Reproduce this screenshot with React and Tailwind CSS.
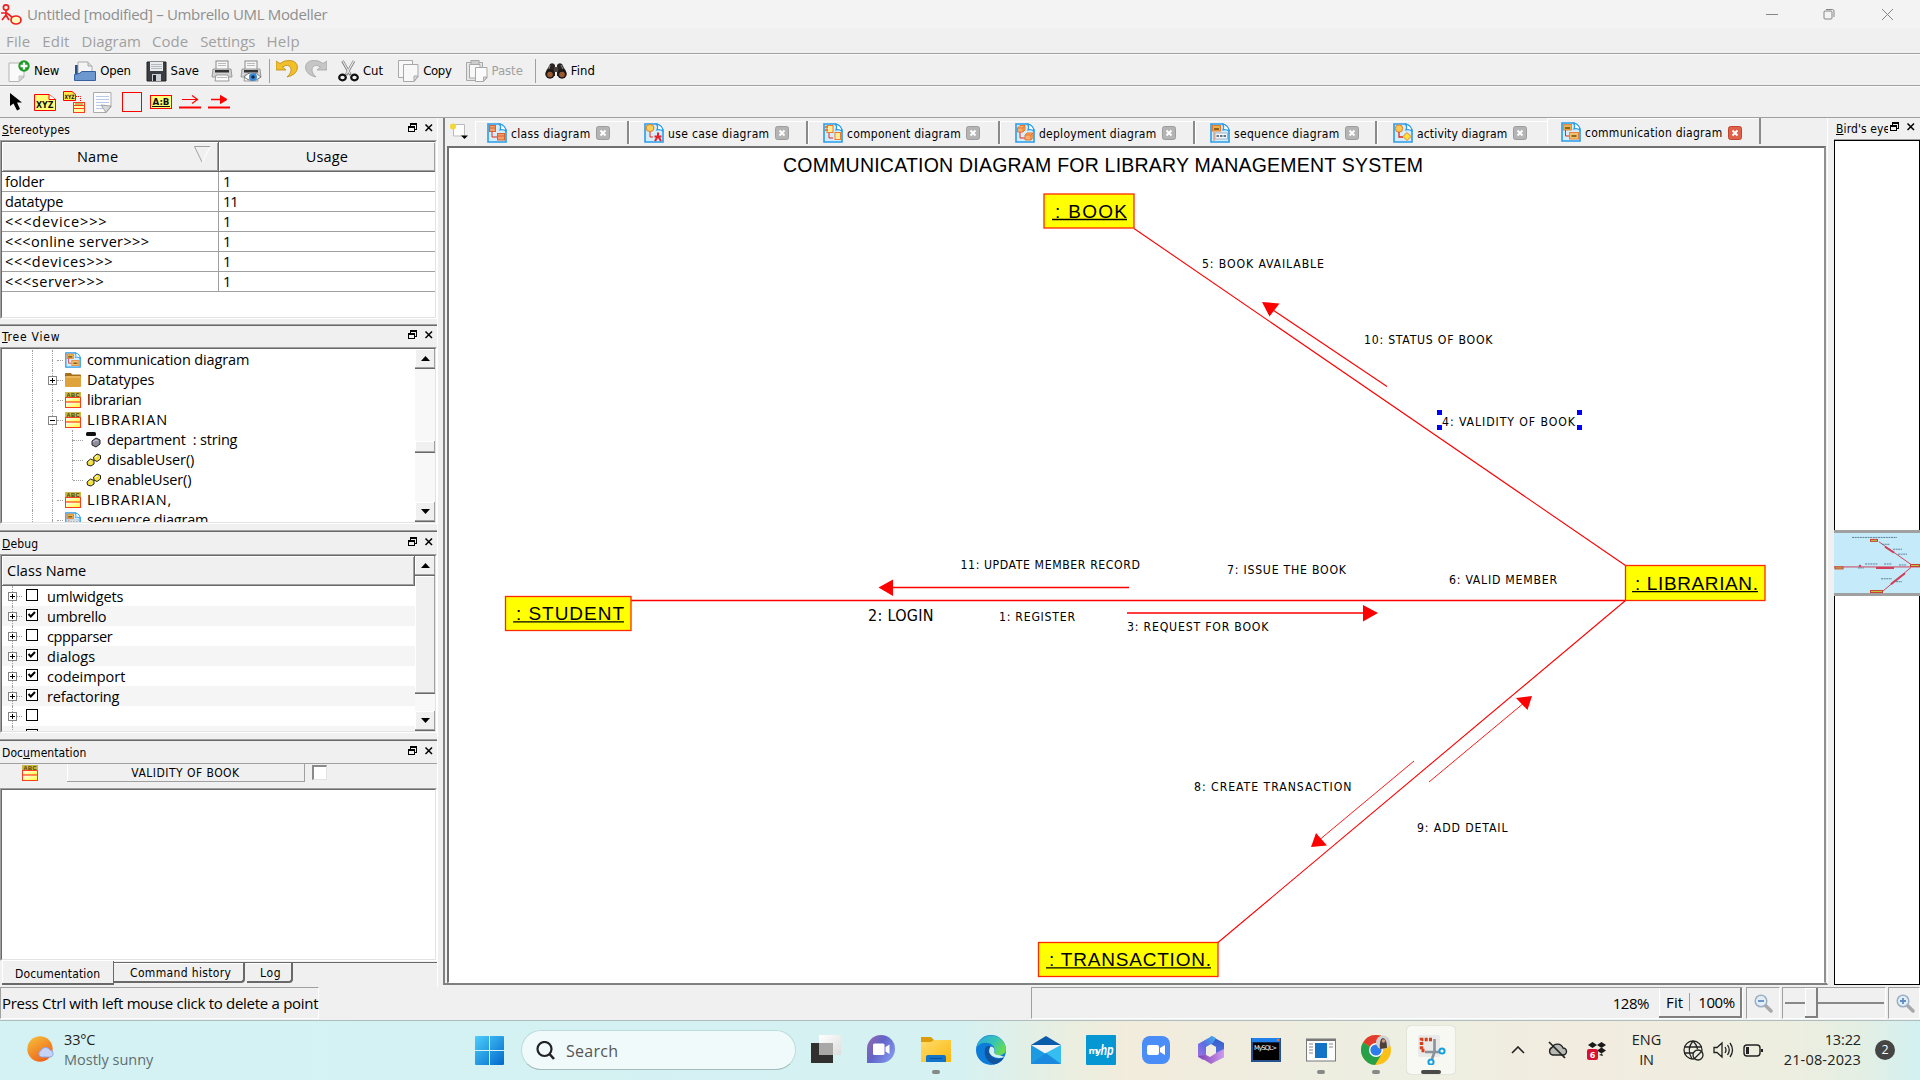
import React, { useLayoutEffect, useRef, useState } from "react";

const UI = "font-['Open_Sans','Noto_Sans',sans-serif]";
const TAH = "font-['DejaVu_Sans_Condensed','DejaVu_Sans',sans-serif] font-[stretch:condensed]";

/* Text whose tracking is adjusted so that it fills w pixels. */
function Fit({ w, className = "", children }) {
  const ref = useRef(null);
  const [ls, setLs] = useState(0);
  useLayoutEffect(() => {
    const el = ref.current;
    const n = el.textContent.length;
    const natural = el.getBoundingClientRect().width;
    if (n) setLs((w + 0.3 - natural) / n);
  }, [w]);
  return (
    <span ref={ref} className={"inline-block whitespace-pre shrink-0 " + className} style={{ letterSpacing: ls + "px" }}>
      {children}
    </span>
  );
}

/* ---------- small icons ---------- */
const DockIcons = () => (
  <svg width="26" height="10" viewBox="0 0 26 10" fill="none" stroke="#000" shapeRendering="crispEdges">
    <path d="M2.5 3V1M2 .5H8.5M2 1.5H8.5M8.5 0V6.5H6.5" />
    <path d="M.5 3.5H6.5V8.5H.5ZM.5 4.5H6.5" />
    <path d="M17.5 1.5L24 8M24 1.5L17.5 8" strokeWidth="1.5" shapeRendering="auto" />
  </svg>
);

const ClassIcon = () => (
  <svg width="16" height="16" viewBox="0 0 16 16" className="shrink-0">
    <defs>
      <linearGradient id="cy" x1="0" x2="1" y1="0" y2="1"><stop offset="0" stopColor="#fff" /><stop offset="1" stopColor="#ffff30" /></linearGradient>
    </defs>
    <rect width="16" height="16" fill="#ff3b20" />
    <rect x="0" y="0" width="16" height="5" fill="#c9b84a" />
    <text x="8" y="4.8" fontSize="5.6" textAnchor="middle" textLength="13" fontWeight="700" fontFamily="Liberation Sans" fill="#4c3c08">ABC</text>
    <rect x="1" y="6" width="14" height="3.4" fill="url(#cy)" />
    <rect x="1" y="10.6" width="14" height="4.4" fill="url(#cy)" />
  </svg>
);

function DiagramIcon({ kind, size = 20 }) {
  return (
    <svg width={size} height={size} viewBox="0 0 20 20" className="shrink-0">
      <path d="M1 1H13L19 7V19H1Z" fill="#d4ecfb" stroke="#2a9de8" strokeWidth="1.6" />
      <path d="M12.5 1.2C17 1.5 19 5 18.8 8C17 6.5 15 6.3 13 6.8C14 5 13.8 3 12.5 1.2Z" fill="#fff" stroke="#2a9de8" strokeWidth="1.2" />
      {kind === "class" && <g fill="#f4a06c" stroke="#d9622e"><rect x="2.5" y="2.5" width="6" height="6" /><path d="M5 9V14H10" fill="none" stroke="#e02a1a" /><rect x="10.500" y="10.500" width="7" height="6.500" /><path d="M3 5H8M11 13H17" /></g>}
      {kind === "usecase" && <g><ellipse cx="6" cy="5" rx="4" ry="3.500" fill="#f7d25a" stroke="#e07a20" /><path d="M6 9V14H9" fill="none" stroke="#e02a1a" /><path d="M14 9.500V13M10.500 13.500H17.500M14 13L11 18M14 13L17 18" stroke="#e8202a" strokeWidth="2" /></g>}
      {kind === "component" && <g fill="#fdee9a" stroke="#ee7a30"><rect x="4" y="2.500" width="6" height="7" /><path d="M2 4H5M2 7H5" strokeWidth="2" /><path d="M6 10V15H10" fill="none" stroke="#e02a1a" /><rect x="12" y="9.500" width="5.500" height="7" /></g>}
      {kind === "deployment" && <g fill="#f8b070" stroke="#e5762c"><path d="M2.500 5L5 2.500H10V7L8 9H2.500ZM2.500 5H8V9M8 5L10 2.500" /><path d="M5 9V15H10" fill="none" stroke="#e02a1a" /><path d="M10 12L12 10H18V14.500L16 17H10ZM10 12H16V17M16 12L18 10" /></g>}
      {kind === "sequence" && <g><rect x="2.500" y="2.500" width="8" height="5.500" fill="#e8b34c" stroke="#e5762c" /><path d="M4 6H9" stroke="#6b4a10" strokeWidth="1.500" /><rect x="5" y="10" width="12.500" height="6" fill="#f4f8fb" stroke="#8ea6b8" strokeWidth=".8" /><path d="M6.500 13H9M10 13H12.500M13.500 13H16" stroke="#657889" strokeWidth="2" /><path d="M4 9V18" stroke="#f08050" /></g>}
      {kind === "activity" && <g><circle cx="6" cy="5.500" r="3.700" fill="#f8c850" stroke="#e87a28" /><path d="M6 9V14H10" fill="none" stroke="#e02a1a" strokeWidth="1.300" /><path d="M14 9.500L18 13.500L14 17.500L10 13.500Z" fill="#ffe23a" stroke="#f07a28" /></g>}
      {kind === "communication" && <g><rect x="2.500" y="2.500" width="8" height="5.500" fill="#e8b34c" stroke="#e98240" /><path d="M4 6H9M10.500 14H15.500" stroke="#6b4a10" strokeWidth="1.500" /><path d="M4.500 8V14H8" fill="none" stroke="#e02a1a" /><rect x="8.500" y="10.500" width="9" height="6.500" fill="#efc168" stroke="#e98240" /><path d="M10.500 14H15.500" stroke="#6b4a10" strokeWidth="1.500" /></g>}
    </svg>
  );
}

const FolderIcon = () => (
  <svg width="16" height="16" viewBox="0 0 16 16" className="shrink-0">
    <path d="M0 2Q0 1 1 1H6L7 2.500H15Q16 2.500 16 3.500V14H0Z" fill="#a56e1a" />
    <rect x="0" y="4" width="16" height="11" rx="1" fill="#dfa23c" />
    <path d="M1 5H15" stroke="#f4cd80" />
  </svg>
);
const AttrIcon = () => (
  <svg width="16" height="16" viewBox="0 0 16 16" className="shrink-0">
    <rect x="0" y="0" width="10" height="4" rx="1.500" fill="#111" />
    <path d="M6 9L10 6L14 8V12L10 15L6 13Z" fill="#8d8b9c" stroke="#222" />
    <path d="M7 10L10 8L12 9" stroke="#cfcfe0" fill="none" />
  </svg>
);
const OpIcon = () => (
  <svg width="16" height="16" viewBox="0 0 16 16" className="shrink-0">
    <path d="M7.500 5L11 2L14.500 3.500V7L11 9.500L8 8Z" fill="#f3df3f" stroke="#222" />
    <path d="M1 10L4.500 7L8 8.500V12L5 14L1.500 13Z" fill="#f3df3f" stroke="#222" />
    <path d="M9 5.500L11 4M3 10L4.500 9" stroke="#fff" />
  </svg>
);

/* ---------- frames ---------- */
const Rule = () => <div className="h-[2px] w-full shrink-0 border-t border-[#a0a0a0] bg-[#696969]" />;

const DockTitle = ({ w, children }) => (
  <div className="flex h-[21px] shrink-0 items-center justify-between pl-[2px] pr-[3px]">
    <Fit w={w} className={TAH + " text-[12px] leading-[14px]"}>{children}</Fit>
    <div className="-mt-[4px]"><DockIcons /></div>
  </div>
);

const Sunken = ({ className = "", children }) => (
  <div className={"w-[437px] shrink-0 border border-b-white border-l-[#a0a0a0] border-r-white border-t-[#a0a0a0] " + className}>
    <div className="flex h-full overflow-hidden border border-b-[#e3e3e3] border-l-[#696969] border-r-[#e3e3e3] border-t-[#696969] bg-white">{children}</div>
  </div>
);

const HeadCell = ({ className = "", children }) => (
  <div className={"flex h-[30px] shrink-0 items-center border-b border-r border-b-[#696969] border-r-[#696969] bg-[#f0f0f0] pt-px shadow-[inset_1px_1px_0_#fff,inset_-1px_-1px_0_#a0a0a0] " + className}>{children}</div>
);

const ScrollBtn = ({ down }) => (
  <div className="flex h-[20px] w-[21px] shrink-0 items-center justify-center border-b border-r border-[#696969] bg-[#f0f0f0] shadow-[inset_-1px_-1px_0_#a0a0a0,inset_1px_1px_0_#fff]">
    <svg width="9" height="5" viewBox="0 0 9 5">{down ? <path d="M0 0H9L4.500 5Z" /> : <path d="M0 5H9L4.500 0Z" />}</svg>
  </div>
);
const Thumb = ({ className }) => (
  <div className={"w-[21px] shrink-0 border-b border-r border-[#696969] bg-[#f0f0f0] shadow-[inset_-1px_-1px_0_#a0a0a0,inset_1px_1px_0_#fff] " + className} />
);

/* ---------- left dock ---------- */
const stereotypes = [
  ["folder", 39, "1", 6], ["datatype", 58, "11", 14], ["<<<device>>>", 102, "1", 6],
  ["<<<online server>>>", 144, "1", 6], ["<<<devices>>>", 108, "1", 6], ["<<<server>>>", 99, "1", 6],
];

function Stereotypes() {
  return (
    <Sunken className="h-[179px]">
      <div className="flex w-full flex-col">
        <div className="flex">
          <HeadCell className="w-[217px]">
            <span className="flex w-full items-center pl-[75px]">
              <Fit w={41} className="text-[14.500px]">Name</Fit>
              <svg width="17" height="17" viewBox="0 0 17 17" className="-mt-[5px] ml-[76px]" fill="none"><path d="M.5.500H16M.5.500L8 16" stroke="#a0a0a0" /><path d="M16 1L8.500 16" stroke="#fff" /></svg>
            </span>
          </HeadCell>
          <HeadCell className="w-[217px] justify-center"><Fit w={42} className="text-[14.500px]">Usage</Fit></HeadCell>
        </div>
        {stereotypes.map(([n, w, u, uw]) => (
          <div key={n} className="flex h-[20px] w-[434px] shrink-0 items-center border-b border-r border-[#a0a0a0] text-[14.500px] leading-[19px]">
            <div className="h-[19px] w-[217px] border-r border-[#a0a0a0] pl-[3px]"><Fit w={w}>{n}</Fit></div>
            <div className="pl-[4px]"><Fit w={uw}>{u}</Fit></div>
          </div>
        ))}
      </div>
    </Sunken>
  );
}

const Expander = ({ open }) => (
  <svg width="9" height="9" viewBox="0 0 9 9" shapeRendering="crispEdges" className="relative shrink-0">
    <rect x=".5" y=".5" width="8" height="8" fill="#fff" stroke="#848484" />
    <path d={open ? "M2 4.500H7" : "M2 4.500H7M4.500 2V7"} stroke="#000" />
  </svg>
);

const tree = [
  { t: "communication diagram", w: 162, icon: <DiagramIcon kind="communication" size={16} /> },
  { t: "Datatypes", w: 67, icon: <FolderIcon />, ex: "closed" },
  { t: "librarian", w: 54, icon: <ClassIcon /> },
  { t: "LIBRARIAN", w: 81, icon: <ClassIcon />, ex: "open" },
  { t: "department  : string", w: 130, icon: <AttrIcon />, sub: true },
  { t: "disableUser()", w: 87, icon: <OpIcon />, sub: true },
  { t: "enableUser()", w: 84, icon: <OpIcon />, sub: true, last: true },
  { t: "LIBRARIAN,", w: 85, icon: <ClassIcon /> },
  { t: "sequence diagram", w: 121, icon: <DiagramIcon kind="sequence" size={16} /> },
];

function TreeView() {
  return (
    <Sunken className="h-[177px]">
      <div className="flex w-[413px] shrink-0 flex-col pt-px">
        {tree.map((r) => (
          <div key={r.t} className="flex h-[20px] shrink-0 items-center">
            <div className="h-full w-[31px] shrink-0 border-r border-dotted border-[#a0a0a0]" />
            <div className="flex h-full w-[15px] shrink-0" />
            <div className="flex h-full w-[9px] shrink-0 flex-col items-center">
              <div className="w-px flex-1 border-l border-dotted border-[#a0a0a0]" />
              {r.ex && <Expander open={r.ex === "open"} />}
              <div className="w-px flex-1 border-l border-dotted border-[#a0a0a0]" />
            </div>
            {r.sub && (
              <div className="flex h-full w-[16px] shrink-0 flex-col items-end">
                <div className="h-[10px] w-px border-l border-dotted border-[#a0a0a0]" />
                {!r.last && <div className="h-[10px] w-px border-l border-dotted border-[#a0a0a0]" />}
              </div>
            )}
            <div className={(r.sub ? "w-[10px] mr-[3px] " : "w-[6px] mr-[2px] ") + "h-px shrink-0 border-t border-dotted border-[#a0a0a0]"} />
            {r.icon}
            <Fit w={r.w} className={(r.sub ? "ml-[5px]" : "ml-[6px]") + " text-[14.500px] leading-[20px]"}>{r.t}</Fit>
          </div>
        ))}
      </div>
      <div className="flex w-[21px] shrink-0 flex-col bg-[#f8f8f8]">
        <ScrollBtn />
        <div className="h-[72px] shrink-0" />
        <Thumb className="h-[12px]" />
        <div className="min-h-0 flex-1" />
        <ScrollBtn down />
      </div>
    </Sunken>
  );
}

const debug = [
  ["umlwidgets", 76, false], ["umbrello", 59, true], ["cppparser", 65, false], ["dialogs", 48, true],
  ["codeimport", 78, true], ["refactoring", 72, true], ["", 0, false], ["umbrello::debug", 80, true],
];

function Debug() {
  return (
    <Sunken className="h-[179px]">
      <div className="flex w-[413px] shrink-0 flex-col">
        <HeadCell className="w-[413px] pl-[5px]"><Fit w={79} className="text-[14.500px]">Class Name</Fit></HeadCell>
        {debug.map(([t, w, on], i) => (
          <div key={i} className={"flex h-[20px] shrink-0 items-center pl-[6px] " + (i % 2 ? "bg-[#f5f5f5]" : "bg-white")}>
            <div className="flex h-full w-[9px] flex-col items-center">
              <div className="w-px flex-1 border-l border-dotted border-[#a0a0a0]" />
              {i < 7 && <Expander />}
              <div className="w-px flex-1 border-l border-dotted border-[#a0a0a0]" />
            </div>
            <div className="mr-[4px] h-px w-[5px] border-t border-dotted border-[#a0a0a0]" />
            <svg width="12" height="12" viewBox="0 0 12 12" className="-mt-[2px] shrink-0">
              <rect x=".5" y=".5" width="11" height="11" fill="#fff" stroke="#000" />
              {on && <path d="M2.500 5L4.800 7.500L9 3" stroke="#000" strokeWidth="2" fill="none" />}
            </svg>
            <Fit w={w} className="ml-[9px] pt-px text-[14.500px] leading-[20px]">{t}</Fit>
          </div>
        ))}
      </div>
      <div className="flex w-[21px] shrink-0 flex-col bg-[#f8f8f8]">
        <ScrollBtn />
        <Thumb className="h-[118px]" />
        <div className="min-h-0 flex-1" />
        <ScrollBtn down />
      </div>
    </Sunken>
  );
}

function LeftDock() {
  return (
    <div className="flex h-[869px] w-[438px] shrink-0 flex-col border-r border-white pt-px">
      <DockTitle w={68}><u>S</u>tereotypes</DockTitle>
      <Stereotypes />
      <div className="h-[5px] shrink-0" />
      <Rule />
      <DockTitle w={58}><u>T</u>ree View</DockTitle>
      <TreeView />
      <div className="h-[6px] shrink-0" />
      <Rule />
      <div className="h-px shrink-0" />
      <DockTitle w={36}><u>D</u>ebug</DockTitle>
      <Debug />
      <div className="h-[6px] shrink-0" />
      <Rule />
      <div className="h-px shrink-0" />
      <DockTitle w={84}>Doc<u>u</u>mentation</DockTitle>
      <div className="flex h-[25px] shrink-0 items-start border-t border-[#a0a0a0] pl-[22px] pt-px">
        <ClassIcon />
        <div className="-mt-px ml-[29px] flex h-[18px] w-[238px] items-center justify-center border-b border-r border-[#a0a0a0] shadow-[inset_1px_0_0_#fff]">
          <Fit w={108} className={TAH + " text-[12px] leading-[14px]"}>VALIDITY OF BOOK</Fit>
        </div>
        <div className="ml-[7px] h-[15px] w-[15px] border-b border-l-2 border-r border-t-2 border-[#8a8a8a] border-b-[#e3e3e3] border-r-[#e3e3e3] bg-white" />
      </div>
      <Sunken className="h-[173px]" />
      <div className="flex h-[24px] shrink-0 items-start">
        <div className="ml-[2px] flex h-[24px] w-[112px] items-center border-b-2 border-r border-[#696969] pl-[13px] pt-[4px] shadow-[inset_1px_0_0_#fff]">
          <Fit w={85} className={TAH + " text-[12px]"}>Documentation</Fit>
        </div>
        <div className="mt-px flex h-[21px] flex-1 items-start border-t border-[#696969]">
          <div className="flex h-[20px] w-[131px] items-center rounded-br-sm border-b-2 border-r-2 border-[#696969] pl-[16px] pt-[2px] shadow-[inset_0_1px_0_#fff]">
            <Fit w={101} className={TAH + " text-[12px]"}>Command history</Fit>
          </div>
          <div className="ml-[2px] flex h-[20px] w-[46px] items-center rounded-br-sm border-b-2 border-r-2 border-[#696969] pl-[13px] pt-[2px] shadow-[inset_0_1px_0_#fff]">
            <Fit w={21} className={TAH + " text-[12px]"}>Log</Fit>
          </div>
        </div>
      </div>
    </div>
  );
}

/* ---------- top bars ---------- */
function TitleBar() {
  return (
    <div className="flex h-[28px] shrink-0 items-center bg-[#f3f3f3] text-[#8f8f8f]">
      <svg width="21" height="21" viewBox="0 0 21 21" className="ml-[1px] shrink-0" fill="none" stroke="#f02020" strokeWidth="1.700">
        <circle cx="5" cy="3.500" r="2.600" /><path d="M5 6V11M0 9H6L12 14M5 11L1 16M5 11L8 16" /><ellipse cx="15" cy="16" rx="5" ry="4" fill="#fffac0" />
      </svg>
      <Fit w={300} className="ml-[5px] pt-px text-[15px]">Untitled [modified] – Umbrello UML Modeller</Fit>
      <div className="ml-auto flex items-center pr-[25px]">
        <svg width="129" height="14" viewBox="0 0 129 14" fill="none" stroke="#858585">
          <path d="M0 7.500H12" /><rect x="58" y="4" width="8" height="8" rx="1" /><path d="M60 2.500H66.500Q68 2.500 68 4V10" /><path d="M116 2L127 13M127 2L116 13" />
        </svg>
      </div>
    </div>
  );
}

function MenuBar() {
  return (
    <div className="flex h-[25px] shrink-0 items-center pl-[6px] pt-[2px] text-[15px] text-[#a0a0a0]">
      <Fit w={24} className="mr-[12px]">File</Fit>
      <Fit w={27} className="mr-[12px]">Edit</Fit>
      <Fit w={59} className="mr-[11px]">Diagram</Fit>
      <Fit w={36} className="mr-[12px]">Code</Fit>
      <Fit w={55} className="mr-[11px]">Settings</Fit>
      <Fit w={33}>Help</Fit>
    </div>
  );
}

const Line = () => <div className="h-[2px] shrink-0 border-b border-t border-b-[#fbfbfb] border-t-[#a0a0a0]" />;
const VSep = ({ className }) => <div className={"h-[24px] w-px shrink-0 bg-[#a0a0a0] " + className} />;

const PrinterBody = () => (
  <g>
    <rect x="5" y="1" width="12" height="9" fill="#f7f7f7" stroke="#8a8a8a" />
    <path d="M7 3.500H15M7 5.500H15" stroke="#bbb" />
    <path d="M2 9H20L21 17H1Z" fill="#d2d2d2" stroke="#888" strokeWidth=".8" />
    <rect x="4" y="10" width="14" height="2.500" fill="#333" />
    <path d="M5 15H17L18 21H4Z" fill="#fafafa" stroke="#999" />
    <path d="M6 17.500H16" stroke="#bbb" />
  </g>
);

function MainToolbar() {
  const label = TAH + " text-[13px]";
  return (
    <div className="flex h-[30px] shrink-0 items-center pl-[8px] pt-px">
      <svg width="22" height="22" viewBox="0 0 22 22" className="shrink-0">
        <path d="M1 3H16V17L11 21.500H1Z" fill="#fafafa" stroke="#b4b4b4" /><path d="M16 16L11 21.500V16Z" fill="#d8d8d8" stroke="#b4b4b4" strokeWidth=".7" />
        <circle cx="16" cy="6" r="5.700" fill="#1c9a26" /><path d="M16 2.500V9.500M12.500 6H19.500" stroke="#fff" strokeWidth="2.400" />
      </svg>
      <Fit w={25} className={"ml-[4px] " + label}>New</Fit>
      <svg width="22" height="22" viewBox="0 0 22 22" className="ml-[15px] shrink-0">
        <path d="M1 5H8V20H1Z" fill="#2c4f86" /><path d="M4 2H14L18 6V14H4Z" fill="#f4f4f4" stroke="#aaa" /><path d="M14 2V6H18" fill="#ddd" stroke="#aaa" />
        <path d="M.5 14.500Q6 14 8 11.500H21.500V20.500H.5Z" fill="#6d97cf" stroke="#35619f" />
      </svg>
      <Fit w={30} className={"ml-[4px] " + label}>Open</Fit>
      <svg width="21" height="22" viewBox="0 0 21 22" className="ml-[15px] shrink-0">
        <path d="M1 2H20V21H1Z" fill="#3a3d42" stroke="#222" /><rect x="4" y="2" width="13" height="9" fill="#e9ecef" /><path d="M5 4.500H16M5 6.500H16M5 8.500H16" stroke="#b5b9be" />
        <rect x="6" y="14" width="9" height="7" fill="#c9ced4" /><rect x="7" y="15" width="3" height="6" fill="#25282c" />
      </svg>
      <Fit w={28} className={"ml-[4px] " + label}>Save</Fit>
      <svg width="22" height="22" viewBox="0 0 22 22" className="ml-[12px] shrink-0"><PrinterBody /></svg>
      <svg width="22" height="22" viewBox="0 0 22 22" className="ml-[7px] shrink-0">
        <PrinterBody /><path d="M4 17Q12 8 21 17Q12 24 4 17Z" fill="#fff" stroke="#777" /><circle cx="13" cy="17" r="4" fill="#3f8ad2" /><circle cx="13" cy="17" r="1.800" fill="#0c2c55" />
      </svg>
      <VSep className="ml-[7px]" />
      <svg width="22" height="20" viewBox="0 0 22 20" className="-mt-[4px] ml-[6px] shrink-0">
        <path d="M0 2V11H10L6.500 8Q12 4.500 14.500 8.500Q16.500 13 11 18Q20.500 16 21.500 9Q21.500 2 14 1.500Q8 1 4 4.500Z" fill="#f0bf2a" stroke="#bd8c10" strokeWidth=".8" />
      </svg>
      <svg width="22" height="20" viewBox="0 0 22 20" className="-mt-[4px] ml-[7px] shrink-0">
        <g transform="matrix(-1 0 0 1 22 0)"><path d="M0 2V11H10L6.500 8Q12 4.500 14.500 8.500Q16.500 13 11 18Q20.500 16 21.500 9Q21.500 2 14 1.500Q8 1 4 4.500Z" fill="#c6c6c6" stroke="#a4a4a4" strokeWidth=".8" /></g>
      </svg>
      <svg width="21" height="22" viewBox="0 0 21 22" className="ml-[11px] shrink-0" fill="none">
        <path d="M4.500 1L12.500 15" stroke="#777" strokeWidth="2.600" /><path d="M16 1L8 15" stroke="#888" strokeWidth="2.600" /><path d="M4.700 1L12 14M15.800 1L8.500 14" stroke="#e8e8e8" strokeWidth="1.200" />
        <ellipse cx="4.500" cy="17.500" rx="3.300" ry="2.800" stroke="#111" strokeWidth="2.200" /><ellipse cx="16.500" cy="17.500" rx="3.300" ry="2.800" stroke="#111" strokeWidth="2.200" />
      </svg>
      <Fit w={20} className={"ml-[4px] " + label}>Cut</Fit>
      <svg width="21" height="22" viewBox="0 0 21 22" className="ml-[15px] shrink-0" fill="#f8f8f8" stroke="#a8a8a8">
        <path d="M.5.500H14.500V17.500H.5Z" /><path d="M5.500 4.500H20V17L16 21.500H5.500Z" /><path d="M20 16H16V21.500Z" fill="#ddd" />
      </svg>
      <Fit w={28} className={"ml-[4px] " + label}>Copy</Fit>
      <svg width="22" height="22" viewBox="0 0 22 22" className="ml-[14px] shrink-0" fill="#e6e6e6" stroke="#a8a8a8">
        <path d="M.5 2.500H16.500V20.500H.5Z" /><path d="M3.500 4.500H14V18H3.500Z" fill="#f8f8f8" /><rect x="5" y=".5" width="8" height="4" fill="#ccc" /><path d="M9.500 7.500H21V18L17.500 21.500H9.500Z" fill="#fbfbfb" /><path d="M21 17H17.500V21.500Z" fill="#ddd" />
      </svg>
      <Fit w={31} className={"ml-[4px] text-[#a0a0a0] " + label}>Paste</Fit>
      <VSep className="ml-[12px]" />
      <svg width="22" height="18" viewBox="0 0 22 18" className="ml-[9px] shrink-0">
        <path d="M5 2Q8 0 10 3V14H1Q0 9 3 6Z" fill="#2b2624" /><path d="M17 2Q14 0 12 3V14H21Q22 9 19 6Z" fill="#2b2624" /><rect x="9" y="5" width="4" height="5" fill="#4a403c" />
        <circle cx="5" cy="12" r="4.700" fill="#1b1817" /><circle cx="17" cy="12" r="4.700" fill="#1b1817" /><circle cx="5" cy="12.500" r="2.800" fill="#9a5a30" /><circle cx="17" cy="12.500" r="2.800" fill="#9a5a30" /><path d="M5 3L4 7M16 3L18 7" stroke="#8a8a8a" />
      </svg>
      <Fit w={24} className={"ml-[4px] " + label}>Find</Fit>
    </div>
  );
}

const Glyph = ({ x, y, size, w, children }) => (
  <text x={x} y={y} fontSize={size} textLength={w} lengthAdjust="spacingAndGlyphs" fontWeight="700" fontFamily="DejaVu Sans" fill="#111">{children}</text>
);

function DiagramToolbar() {
  return (
    <div className="flex h-[30px] shrink-0 items-center pl-[10px]">
      <svg width="14" height="18" viewBox="0 0 14 18" className="shrink-0"><path d="M0 0V13L3.500 10.500L7 17.500L10 16L7 9.500H12Z" /></svg>
      <svg width="22" height="17" viewBox="0 0 22 17" className="ml-[10px] shrink-0">
        <path d="M.5.500H15L21.500 5.500V16.500H.5Z" fill="#ffff78" stroke="#f00" /><path d="M15 .500V5.500H21.500" fill="#fff" stroke="#f00" /><Glyph x="2" y="13.500" size="9" w="17.500">XYZ</Glyph>
      </svg>
      <svg width="22" height="22" viewBox="0 0 22 22" className="ml-[7px] shrink-0">
        <path d="M.5.500H9L12.500 3.500V9.500H.5Z" fill="#ffe84a" stroke="#f00" /><Glyph x="1.500" y="8" size="6" w="10">XYZ</Glyph>
        <path d="M13 5.500H17.500V11" fill="none" stroke="#f00" strokeDasharray="1 1" />
        <rect x="10.500" y="11.500" width="11" height="10" fill="#ffffa0" stroke="#ff3b20" /><path d="M10 14.500H22M10 17.500H22" stroke="#ff3b20" /><path d="M12 13H20" stroke="#8b6a20" />
      </svg>
      <svg width="19" height="21" viewBox="0 0 19 21" className="ml-[8px] shrink-0">
        <path d="M.5.500H18V15L13 20.500H.5Z" fill="#fcfcfc" stroke="#aaa" /><path d="M3 4.500H16M3 7.500H16M3 10.500H16M3 13.500H12M3 16.500H10" stroke="#b9c9e6" /><path d="M18 14L8 13L13 20.500Z" fill="#d8d8d8" stroke="#888" strokeWidth=".7" />
      </svg>
      <div className="ml-[10px] h-[20px] w-[20px] shrink-0 border border-[#f00]" />
      <svg width="22" height="14" viewBox="0 0 22 14" className="ml-[8px] shrink-0">
        <rect x=".5" y=".5" width="21" height="13" fill="#ffff78" stroke="#f00" /><Glyph x="2.500" y="9.500" size="8" w="17">A:B</Glyph><path d="M2 11.500H20" stroke="#111" />
      </svg>
      <svg width="22" height="16" viewBox="0 0 22 16" className="ml-[7px] shrink-0" fill="none" stroke="#f00"><path d="M3 5.500H18M13 1.500L18.500 5.500L13 9.500" strokeWidth="1.200" /><path d="M0 13.500H22" strokeWidth="2" /></svg>
      <svg width="22" height="16" viewBox="0 0 22 16" className="ml-[7px] shrink-0" stroke="#f00"><path d="M3 5.500H13" strokeWidth="1.500" /><path d="M12.500 1.500L19 5.500L12.500 9.500Z" fill="#f00" /><path d="M0 13.500H22" strokeWidth="2" /></svg>
    </div>
  );
}

/* ---------- diagram area ---------- */
const CloseBox = ({ active }) => (
  <svg width="14" height="14" viewBox="0 0 14 14" className="mt-px shrink-0">
    <rect x=".5" y=".5" width="13" height="13" rx="2" fill={active ? "#e0614a" : "#b4b4b4"} stroke={active ? "#c04630" : "#9d9d9d"} />
    <path d="M4.500 4.500L9.500 9.500M9.500 4.500L4.500 9.500" stroke="#fff" strokeWidth="2" />
  </svg>
);

function Tab({ kind, w, label, className = "", active, last }) {
  return (
    <div className={"flex shrink-0 items-center shadow-[inset_1px_1px_0_#fff] " + (active ? "h-[26px] " : "mt-[3px] h-[23px] ") + className}>
      <div className={"flex items-center " + (active ? "pt-[2px]" : "")}>
        <DiagramIcon kind={kind} />
        <Fit w={w + 0.7} className={"ml-[4px] mr-[5px] pt-[2px] text-[12px] " + TAH}>{label}</Fit>
        <CloseBox active={active} />
      </div>
      {!last && <div className="ml-auto w-[2px] shrink-0 self-stretch bg-[#8a8a8a]" />}
    </div>
  );
}

const labels = [
  ["5: BOOK AVAILABLE", 1202, 268, 122], ["10: STATUS OF BOOK", 1364, 344, 128.5], ["4: VALIDITY OF BOOK", 1442, 426, 133],
  ["11: UPDATE MEMBER RECORD", 960.5, 569, 179.5], ["7: ISSUE THE BOOK", 1227, 574, 119], ["6: VALID MEMBER", 1449, 584, 108],
  ["1: REGISTER", 999, 621, 76], ["3: REQUEST FOR BOOK", 1127, 631, 141.5],
  ["8: CREATE TRANSACTION", 1194, 791, 157.5], ["9: ADD DETAIL", 1417, 832, 90.5],
];
const nodes = [
  [": BOOK", 1044, 194, 90, 34, 1052, 75, 217.7], [": LIBRARIAN.", 1625.500, 565.500, 139.500, 35, 1632, 126, 589.8],
  [": STUDENT", 505.500, 596.500, 125.500, 34, 513, 111, 620], [": TRANSACTION.", 1038.500, 942.500, 179.500, 34, 1046, 165, 966],
];

function Canvas() {
  return (
    <svg width="1375" height="835" viewBox="449 148 1375 835" className="block bg-white">
      <g stroke="#f00" strokeWidth="1.100" fill="none">
        <path d="M1134 228.500L1625.500 565.500M1218 942.500L1625.500 600.500" />
        <path d="M631 600.500H1625.500" strokeWidth="1.500" />
        <path d="M1387 386.500L1270 308" />
        <path d="M1414 761L1318 841M1429 782L1525 702" strokeWidth=".9" />
        <path d="M1129 587.500H892M1127 613H1365" strokeWidth="1.500" />
      </g>
      <g fill="#f00">
        <path d="M878.500 587.500L893 579.500V596ZM1378 613L1363 605V621.500ZM1262 302L1279.500 303.500L1269.500 316.500Z" />
        <path d="M1311 847L1316 833L1327 845.500ZM1532 696L1516 698L1527.500 710Z" />
      </g>
      <text x="783" y="171.500" fontSize="19.500" textLength="640" fontFamily="Liberation Sans">COMMUNICATION DIAGRAM FOR LIBRARY MANAGEMENT SYSTEM</text>
      {nodes.map(([t, x, y, w, h, tx, tw, base]) => (
        <g key={t}>
          <rect x={x} y={y} width={w} height={h} fill="#ff0" stroke="#ff2a00" strokeWidth="1.300" />
          <text x={tx + 3} y={base} fontSize="19" textLength={tw - 3} fontFamily="Liberation Sans">{t}</text>
          <path d={`M${tx} ${base + 1.800}h${tw}`} stroke="#000" strokeWidth="1.300" />
        </g>
      ))}
      {labels.map(([t, x, y, w]) => (
        <text key={t} x={x} y={y} fontSize="12.200" textLength={w} fontFamily="'DejaVu Sans Condensed','DejaVu Sans'" fontStretch="condensed">{t}</text>
      ))}
      <text x="868" y="621" fontSize="16" textLength="65.500" fontFamily="'DejaVu Sans Condensed','DejaVu Sans'" fontStretch="condensed">2: LOGIN</text>
      <path d="M1437 410h5v5h-5zM1577 410h5v5h-5zM1437 425h5v5h-5zM1577 425h5v5h-5z" fill="#00f" />
    </svg>
  );
}

function Center() {
  return (
    <div className="flex h-[867px] w-[1385px] shrink-0 flex-col border-b-2 border-l-2 border-r border-[#808080] border-r-white bg-[#f0f0f0]">
      <div className="flex h-[28px] shrink-0 items-start">
        <svg width="20" height="18" viewBox="0 0 20 18" className="ml-[4px] mt-[5px] shrink-0">
          <path d="M4.500 1.500H15.500V13H8.500L4.500 13Z" fill="#fdfdfd" stroke="#bbb" /><circle cx="4" cy="3.500" r="3" fill="#f6d633" /><path d="M12 12.500H19L15.500 16Z" fill="#000" />
        </svg>
        <Tab kind="class" w={78.500} label="class diagram" className="ml-[6px] w-[154px] pl-[12px]" />
        <Tab kind="usecase" w={100.500} label="use case diagram" className="w-[179px] pl-[15px]" />
        <Tab kind="component" w={113} label="component diagram" className="w-[192px] pl-[15px]" />
        <Tab kind="deployment" w={116.500} label="deployment diagram" className="w-[195px] pl-[15px]" />
        <Tab kind="sequence" w={104.500} label="sequence diagram" className="w-[182px] pl-[15px]" />
        <Tab kind="activity" w={89.500} label="activity diagram" last className="w-[170px] pl-[16px]" />
        <Tab kind="communication" w={136.500} label="communication diagram" active className="w-[214px] pl-[14px]" />
      </div>
      <div className="ml-[2px] h-[837px] w-[1379px] border-b border-l-2 border-r-2 border-t-2 border-b-[#e3e3e3] border-l-[#707070] border-r-[#909090] border-t-[#707070]">
        <Canvas />
      </div>
    </div>
  );
}

function BirdsEye() {
  return (
    <div className="flex h-[868px] w-[86px] shrink-0 flex-col">
      <div className="flex h-[22px] shrink-0 items-center border-b border-[#a0a0a0] pl-[2px]">
        <div className="flex w-[52px] shrink-0 overflow-hidden pt-px"><Fit w={54} className={TAH + " text-[12px]"}><u>B</u>ird's eye</Fit></div>
        <div className="-mt-[3px] ml-[2px] shrink-0"><DockIcons /></div>
      </div>
      <div className="flex h-[845px] flex-col border border-black bg-white">
        <div className="h-[389px]" />
        <div className="-mx-px h-[66px] border-b-[3px] border-t-[3px] border-[#a0a0a0] bg-[#c5eafa]">
          <svg width="86" height="60" viewBox="0 0 86 61" fill="none" preserveAspectRatio="none">
            <g stroke="#d04058"><path d="M45 9L77 32M0 34.500H86M49 59L77 35" /><path d="M51 14L60 20M57 52L71 41M42 35.500H60M25 33L27 34" strokeWidth="2" /></g>
            <g fill="#c0c840" stroke="#c84030"><rect x="36.500" y="6.500" width="7" height="2" /><rect x="76.500" y="32" width="9" height="2" /><rect x="1" y="34.500" width="8" height="2" /><rect x="36.500" y="58.500" width="12" height="2" /></g>
            <g stroke="#5a8496" strokeDasharray="2 .6"><path d="M18 4.500H63M48 11.500H56M59 16.500H68M64 21.500H73M31 31.500H44M50 31.500H58M65 32.500H72M24 35.500H30M47 46.500H58M62 49.500H68" strokeWidth="1" /></g>
          </svg>
        </div>
      </div>
    </div>
  );
}

/* ---------- status bar ---------- */
const Cell = ({ className = "", children }) => (
  <div className={"flex h-[32px] shrink-0 items-center border border-b-white border-l-[#a0a0a0] border-r-white border-t-[#a0a0a0] " + className}>{children}</div>
);
const Zoom = ({ plus }) => (
  <svg width="19" height="19" viewBox="0 0 19 19" fill="none">
    <path d="M11 11L17 17" stroke="#a9a9a9" strokeWidth="3.500" strokeLinecap="round" /><circle cx="7" cy="7" r="5.800" fill="#e2edf8" stroke="#9cb0c4" strokeWidth="1.500" />
    <path d={plus ? "M4 7H10M7 4V10" : "M4 7H10"} stroke="#5f8fc4" strokeWidth="1.800" />
  </svg>
);

function StatusBar() {
  return (
    <div className="flex h-[33px] shrink-0 items-start bg-[#f0f0f0] text-[15px]">
      <Cell className="w-[319px] pl-px"><Fit w={316}>Press Ctrl with left mouse click to delete a point</Fit></Cell>
      <Cell className="ml-[712px] w-[712px] justify-end">
        <Fit w={36} className="mr-[10px]">128%</Fit>
        <div className="flex h-[30px] w-[83px] items-center border-b-2 border-r-2 border-[#808080] pl-[7px] shadow-[inset_1px_0_0_#fff]">
          <Fit w={17}>Fit</Fit>
          <div className="ml-[6px] mr-[8px] h-[18px] w-px bg-[#a0a0a0]" />
          <Fit w={36}>100%</Fit>
        </div>
      </Cell>
      <Cell className="ml-[3px] w-[34px] pl-[7px]"><Zoom /></Cell>
      <Cell className="ml-[2px] w-[104px]">
        <div className="ml-[2px] h-[2px] w-[20px] bg-[#888]" />
        <div className="h-[30px] w-[13px] border-b-2 border-r-2 border-[#808080] shadow-[inset_1px_1px_0_#fff]" />
        <div className="h-[2px] w-[66px] bg-[#888]" />
      </Cell>
      <Cell className="ml-[2px] w-[32px] pl-[7px]"><Zoom plus /></Cell>
    </div>
  );
}

/* ---------- taskbar ---------- */
const App30 = ({ children, className = "", run, active }) => (
  <div className={"flex h-[48px] w-[48px] shrink-0 flex-col items-center rounded-[4px] pt-[9px] " + (active ? "bg-white/60 shadow-[0_0_1px_#999] " : "") + className}>
    <svg width="30" height="30" viewBox="0 0 30 30">{children}</svg>
    {run && <div className="mt-[5px] h-[4px] w-[8px] rounded-full bg-[#858a86]" />}
    {active && <div className="mt-[5px] h-[4px] w-[20px] rounded-full bg-[#4a4a48]" />}
  </div>
);

function Taskbar() {
  return (
    <div className="flex h-[60px] shrink-0 items-center border-t border-[#aebebe] bg-[linear-gradient(90deg,#d4f2f4_0%,#d5f1f2_50%,#ebeedf_56%,#f2ecdc_59%,#efeddf_66%,#ecefe2_73%,#f2ecdf_82%,#edeee0_93%,#e4efe4_97%,#d2f0f2_100%)] pb-px">
      <svg width="28" height="28" viewBox="0 0 28 28" className="ml-[27px]">
        <defs><linearGradient id="sun" x2="0.600" y2="1"><stop stopColor="#f6c33c" /><stop offset="1" stopColor="#f0641a" /></linearGradient></defs>
        <circle cx="13" cy="13" r="12.700" fill="url(#sun)" /><path d="M14 21A3.500 3.500 0 0 1 14 14.500A5 5 0 0 1 23 14A3.700 3.700 0 0 1 24 21Z" fill="#c5d4f6" stroke="#8aa5e4" />
      </svg>
      <div className="ml-[9px] flex w-[89px] shrink-0 flex-col pb-px text-[14.500px] leading-[20px]">
        <Fit w={31} className="self-start text-[#222]">33°C</Fit>
        <Fit w={89} className="self-start text-[#5f6e6e]">Mostly sunny</Fit>
      </div>
      <svg width="29" height="29" viewBox="0 0 29 29" className="ml-[322px] shrink-0">
        <defs><linearGradient id="win" x2="1" y2="1"><stop stopColor="#4ccdfb" /><stop offset="1" stopColor="#0269cc" /></linearGradient></defs>
        <path d="M0 1Q0 0 1 0H14V14H0ZM15 0H28Q29 0 29 1V14H15ZM0 15H14V29H1Q0 29 0 28ZM15 15H29V28Q29 29 28 29H15Z" fill="url(#win)" />
      </svg>
      <div className="ml-[17px] flex h-[40px] w-[275px] shrink-0 items-center rounded-full border border-[#bcdcdc] border-b-[#a4bcbc] bg-[#f1fafb] pl-[14px]">
        <svg width="19" height="19" viewBox="0 0 19 19" fill="none" stroke="#222" strokeWidth="2.200"><circle cx="8.500" cy="8" r="7" /><path d="M13.500 13L18 18" strokeWidth="2.600" /></svg>
        <Fit w={52} className="ml-[11px] pt-px text-[16px] text-[#555]">Search</Fit>
      </div>
      <App30 className="ml-[6px]">
        <defs><linearGradient id="tv" x2="1" y2="1"><stop stopColor="#fff" /><stop offset="1" stopColor="#ddd" /></linearGradient></defs>
        <path d="M0 8H22V28H0Z" fill="#31302e" /><rect x="8" y="0" width="22" height="20" fill="url(#tv)" /><path d="M8 8H22V20H8Z" fill="#a8a8a6" />
      </App30>
      <App30 className="ml-[7px]">
        <defs><linearGradient id="chat" x1="0" x2="1" y2=".6"><stop stopColor="#9a6aa8" /><stop offset=".5" stopColor="#6264c8" /><stop offset="1" stopColor="#7f93ea" /></linearGradient></defs>
        <path d="M1 28V14A14 14 0 1 1 15 28Z" fill="url(#chat)" /><rect x="7" y="8.500" width="11.500" height="11.500" rx="1.500" fill="#fff" /><path d="M19.500 12L23.500 9.500V19L19.500 16.500Z" fill="#fff" />
      </App30>
      <App30 className="ml-[7px]" run>
        <defs><linearGradient id="fo" x2="1" y2="1"><stop stopColor="#ffdc6e" /><stop offset="1" stopColor="#fbb80c" /></linearGradient></defs>
        <path d="M0 2H10L13 5H18V9H0Z" fill="#dd9d0a" /><path d="M0 7H10L13 5H30V27H0Z" fill="url(#fo)" /><path d="M5 27V22Q5 20 7 20H23Q25 20 25 22V27Z" fill="#1074cc" /><path d="M9 23.500H21" stroke="#0a4f92" />
      </App30>
      <App30 className="ml-[7px]">
        <defs><linearGradient id="e1" x2="1" y2=".5"><stop stopColor="#2aa4e4" /><stop offset=".6" stopColor="#36c4b4" /><stop offset="1" stopColor="#66da58" /></linearGradient></defs>
        <circle cx="15" cy="15" r="15" fill="#0c7cd8" />
        <path d="M0.500 12A15 15 0 0 1 30 14Q30 20 23 20Q18 20 18.500 17.500Q20 12 14 8.500Q6 6 .5 12Z" fill="url(#e1)" />
        <path d="M9 14Q7 25 18 29.500Q25 28 28 22.500Q20 26 15.500 21Q12 17 15 11.500Q10 10 9 14Z" fill="#1053a0" /><path d="M14.500 11.500Q19.500 12 18.200 17.500Q18.500 20 24 20.300L28.500 22Q22 24.500 16 21Q11 17 14.500 11.500Z" fill="#d6f0f0" />
      </App30>
      <App30 className="ml-[7px]">
        <path d="M0 10L15 1L30 10Z" fill="#0a5cab" /><path d="M2 10H28L17 19H13Z" fill="#f3f3f3" /><path d="M0 10L15 19L30 29H0Z" fill="#1c9ae2" /><path d="M30 10V29L13 19Z" fill="#35bdf2" /><path d="M0 29L15 18L30 29Z" fill="#1b8ade" />
      </App30>
      <App30 className="ml-[7px]">
        <rect width="30" height="30" rx="1" fill="#0597d4" /><text x="2.500" y="18.500" fontSize="9.500" fontWeight="700" fontFamily="Open Sans" fill="#fff" textLength="12.500">my</text><text x="14.500" y="19.500" fontSize="14.500" fontStyle="italic" fontWeight="700" fontFamily="Liberation Sans" fill="#fff" textLength="13" lengthAdjust="spacingAndGlyphs">hp</text>
      </App30>
      <App30 className="ml-[7px]"><rect x="1" y="1" width="28" height="28" rx="8" fill="#4a8cf8" /><rect x="6" y="10" width="12" height="10" rx="2" fill="#fff" /><path d="M19 13L24 10V20L19 17Z" fill="#fff" /></App30>
      <App30 className="ml-[7px]">
        <defs>
          <linearGradient id="ma" x1="1" x2="0" y2="1"><stop stopColor="#3fb2ee" /><stop offset=".5" stopColor="#5a6fe0" /><stop offset="1" stopColor="#b070e0" /></linearGradient>
          <linearGradient id="mb" x2="0" y2="1"><stop stopColor="#2b5cc4" /><stop offset="1" stopColor="#6a78e8" /></linearGradient>
          <linearGradient id="mc" x2="1"><stop stopColor="#7c3fb0" /><stop offset="1" stopColor="#cf9af0" /></linearGradient>
        </defs>
        <path d="M15 1L28 8V22L20 26V12L13 8Z" fill="url(#mb)" />
        <path d="M16 1L2 9V22L7 25L10 23V12L17 8L20 3Z" fill="url(#ma)" />
        <path d="M2 21L15 29L28 22V14L20 18L14 22L10 20Z" fill="url(#mc)" />
        <path d="M15 9.500L19.500 12V18L15 20.500L10.500 18V12Z" fill="#f1eddf" />
      </App30>
      <App30 className="ml-[7px]">
        <rect x="0" y="3" width="30" height="24" fill="#26518e" /><rect x="1" y="3" width="28" height="4" fill="#1f80ea" /><path d="M26 5h2" stroke="#f07030" strokeWidth="2" /><rect x="2" y="7.500" width="26" height="17.500" fill="#000" /><text x="3" y="15" fontSize="6.500" fontFamily="DejaVu Sans" fill="#fff" textLength="23">MySQL&gt;</text>
      </App30>
      <App30 className="ml-[7px]" run>
        <rect x=".5" y="4" width="29" height="22" fill="#fcfcfc" stroke="#777a78" /><path d="M0 5H30" stroke="#777a78" strokeWidth="2" /><rect x="9" y="8" width="12" height="15" fill="#1273c6" /><path d="M3 9H7M3 12H7M3 15H7M3 18H7M23 9H27M23 12H27" stroke="#8a8a8a" />
      </App30>
      <App30 className="ml-[7px]" run>
        <circle cx="15" cy="15" r="15" fill="#fbc116" /><path d="M15 15L2 7.500A15 15 0 0 1 28 7.500Z" fill="#e33b2e" /><path d="M15 15L2 7.500A15 15 0 0 0 14 30L21 18.500Z" fill="#28a048" /><circle cx="15" cy="15" r="7" fill="#fff" /><circle cx="15" cy="15" r="5.600" fill="#2e7bea" /><circle cx="22" cy="7.500" r="7" fill="#cfd2d0" /><path d="M19 14Q18 4 22 3Q26 4 26 13Z" fill="#4c4038" /><circle cx="22.500" cy="6" r="1.800" fill="#c99a80" />
      </App30>
      <App30 className="ml-[7px]" active>
        <rect x="2" y="0" width="22" height="22" rx="2" fill="#e9eaea" /><path d="M16 4.500H5.500V15.500H9" fill="none" stroke="#d8401c" strokeWidth="3.500" strokeDasharray="3 1.300" />
        <path d="M18.500 4V17L16 24M9 17H24" fill="none" stroke="#8a9298" strokeWidth="2.600" /><circle cx="26" cy="16" r="2.600" fill="none" stroke="#16a0e0" strokeWidth="2" /><circle cx="15" cy="27" r="2.600" fill="none" stroke="#16a0e0" strokeWidth="2" />
      </App30>
      <svg width="14" height="8" viewBox="0 0 14 8" className="ml-[56px] shrink-0" fill="none" stroke="#222" strokeWidth="1.600"><path d="M1 7L7 1L13 7" /></svg>
      <svg width="21" height="18" viewBox="0 0 21 18" className="ml-[22px] shrink-0" fill="none" stroke="#222" strokeWidth="1.400"><path d="M5.500 14A4 4 0 0 1 5 6.500A6 6 0 0 1 16 7A3.500 3.500 0 0 1 16 14Z" fill="#b8b8b4" /><path d="M2 1L18 17" strokeWidth="1.700" /></svg>
      <svg width="20" height="19" viewBox="0 0 20 19" className="ml-[19px] shrink-0">
        <path d="M1 4L5.500 1L10 4L5.500 7ZM10 4L14.500 1L19 4L14.500 7ZM10 9.500L14.500 6.500L19 9.500L14.500 12.500ZM12 14L15 12.500L16 15Z" fill="#1a1a1a" /><rect x="0" y="8" width="11" height="11" rx="2" fill="#da0f34" /><text x="3" y="16.800" fontSize="9" fontWeight="700" fontFamily="Open Sans" fill="#fff">6</text>
      </svg>
      <div className="ml-[24px] flex w-[31px] flex-col items-center text-[14.500px] leading-[20px] text-[#222]"><Fit w={29}>ENG</Fit><Fit w={14}>IN</Fit></div>
      <svg width="21" height="21" viewBox="0 0 21 21" className="ml-[21px] shrink-0" fill="none" stroke="#222" strokeWidth="1.300">
        <circle cx="10" cy="10" r="9" /><path d="M1 7H19M1 13H10M10 1Q3 9 9 19M10 1Q14 5 14.500 9" /><circle cx="15" cy="15" r="5" fill="#eeeee0" /><path d="M11.500 18.500L18.500 11.500" />
      </svg>
      <svg width="21" height="18" viewBox="0 0 21 18" className="ml-[9px] shrink-0" fill="none" stroke="#222" strokeWidth="1.300"><path d="M1 6.500H4L9 2V16L4 11.500H1ZM12 6Q14 9 12 12M14.500 4Q18 9 14.500 14M17 2Q22 9 17 16" /></svg>
      <svg width="21" height="13" viewBox="0 0 21 13" className="ml-[9px] shrink-0" fill="none" stroke="#222" strokeWidth="1.400"><rect x="1" y="1" width="16" height="11" rx="3" /><path d="M19 5V8" strokeWidth="2" /><rect x="3" y="3" width="3" height="7" fill="#222" stroke="none" /></svg>
      <div className="ml-[20px] flex w-[77px] shrink-0 flex-col items-end pb-px text-[14.500px] leading-[20px] text-[#222]"><Fit w={36}>13:22</Fit><Fit w={77}>21-08-2023</Fit></div>
      <div className="ml-[14px] flex h-[20px] w-[20px] shrink-0 items-center justify-center rounded-full bg-[#454545] text-[12.500px] text-white">2</div>
    </div>
  );
}

export default function App() {
  return (
    <div className={"flex h-[1080px] w-[1920px] flex-col overflow-hidden bg-[#f0f0f0] text-black " + UI}>
      <TitleBar />
      <MenuBar />
      <Line />
      <MainToolbar />
      <Line />
      <DiagramToolbar />
      <div className="h-px shrink-0 bg-[#a0a0a0]" />
      <div className="flex h-[869px] shrink-0">
        <LeftDock />
        <div className="w-[5px] shrink-0" />
        <Center />
        <div className="w-[6px] shrink-0" />
        <BirdsEye />
      </div>
      <StatusBar />
      <Taskbar />
    </div>
  );
}
